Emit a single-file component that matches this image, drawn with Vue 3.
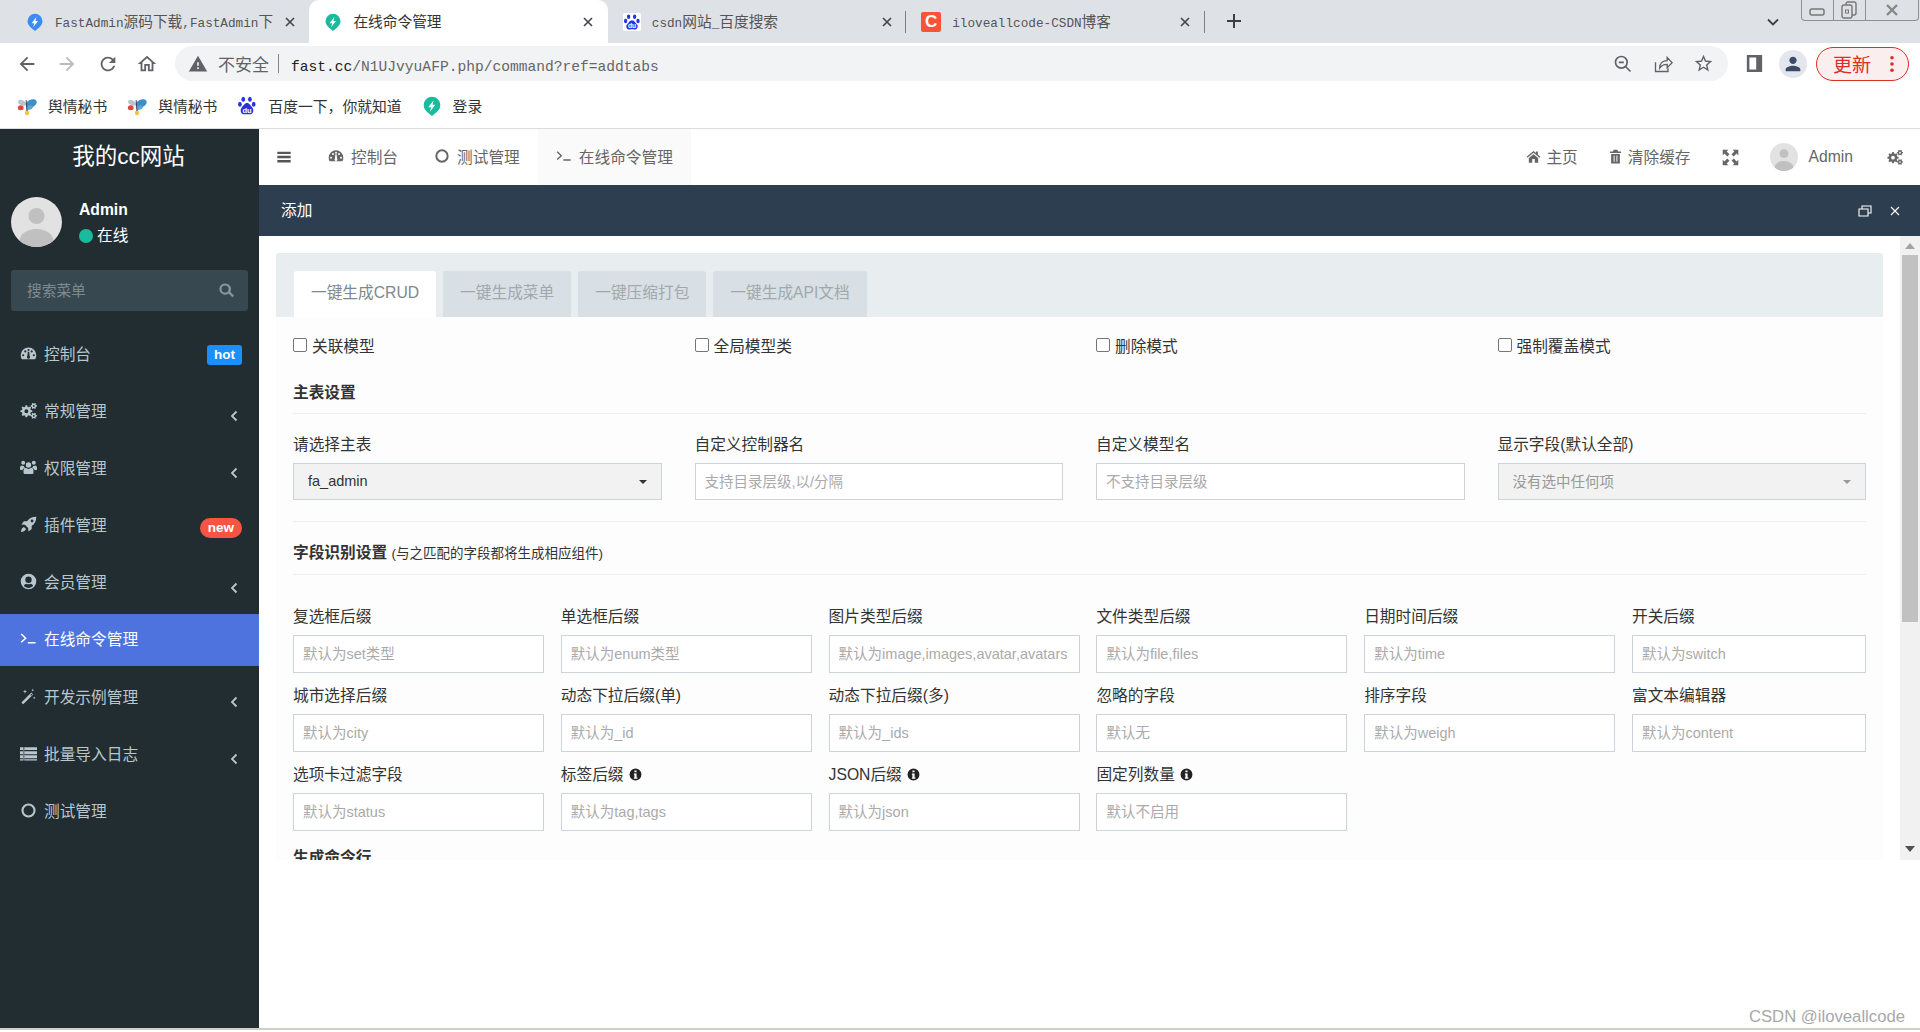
<template>
  <div class="page">
    <!-- browser chrome -->
    <div class="tabstrip">
      <div v-for="tab in browserTabs" :key="tab.id" class="btab" :class="{ active: tab.active }">
        <svg v-if="tab.icon === 'drop'" class="fav" viewBox="0 0 24 24">
          <path :fill="tab.color" :d="icons.drop" />
          <path fill="#fff" :d="icons.bolt" />
        </svg>
        <svg v-else-if="tab.icon === 'baidu'" class="fav" viewBox="0 0 24 24">
          <rect width="24" height="24" rx="2" fill="#fff" />
          <g fill="#2932e1">
            <ellipse cx="7.5" cy="5" rx="2.2" ry="3" />
            <ellipse cx="15.5" cy="5" rx="2.2" ry="3" />
            <ellipse cx="3.5" cy="10.5" rx="2.2" ry="3" />
            <ellipse cx="20" cy="10.5" rx="2.2" ry="3" />
            <path d="M12 9.5c-3 0-4 3-6.500 5.500C3 18 5 22.500 9 22c2-.3 4-.3 6 0 4 .5 6-4 3.500-7-2.500-2.500-3.500-5.500-6.500-5.500z" />
          </g>
          <text x="12" y="20" text-anchor="middle" class="du">du</text>
        </svg>
        <div v-else class="fav csdn">C</div>
        <div class="btab-title" :class="{ plain: tab.active }">
          <span v-for="(part, i) in tab.title" :key="i" :class="{ han: i % 2 === 1 }">{{ part }}</span>
        </div>
        <svg class="btab-close" viewBox="0 0 12 12">
          <path d="M2 2l8 8M10 2l-8 8" fill="none" stroke="#45494e" stroke-width="1.700" />
        </svg>
        <i v-if="!tab.active && tab.sep" class="btab-sep"></i>
      </div>
      <svg class="newtab" viewBox="0 0 16 16"><path d="M8 1v14M1 8h14" fill="none" stroke="#3c4043" stroke-width="2" /></svg>
      <svg class="tablist" viewBox="0 0 12 8"><path d="M1 1.500l5 5 5-5" fill="none" stroke="#3c4043" stroke-width="1.800" /></svg>
      <div class="winctl">
        <span class="wc wc-min"><svg viewBox="0 0 16 10"><rect x="1" y="2" width="14" height="6" rx="2" fill="none" stroke="#777" stroke-width="1.500" /></svg></span>
        <span class="wc wc-max"><svg viewBox="0 0 16 18"><rect x="5" y="1" width="10" height="13" rx="2" fill="#dee1e6" stroke="#777" stroke-width="1.400" /><rect x="1" y="4" width="10" height="13" rx="2" fill="#dee1e6" stroke="#777" stroke-width="1.400" /><rect x="4.500" y="9" width="3" height="3" fill="none" stroke="#777" /></svg></span>
        <span class="wc wc-close"><svg viewBox="0 0 14 14"><path d="M2 2l10 10M12 2L2 12" fill="none" stroke="#888" stroke-width="2.400" /></svg></span>
      </div>
    </div>

    <div class="toolbar">
      <svg class="tool back" viewBox="0 0 24 24"><path fill="#5f6368" :d="icons.back" /></svg>
      <svg class="tool fwd" viewBox="0 0 24 24"><path fill="#b8bbc0" :d="icons.forward" /></svg>
      <svg class="tool reload" viewBox="0 0 24 24"><path fill="#5f6368" :d="icons.reload" /></svg>
      <svg class="tool homebtn" viewBox="0 0 24 24"><path fill="#5f6368" :d="icons.homeOutline" /></svg>
      <div class="omnibox">
        <svg class="warn" viewBox="0 0 24 24">
          <path fill="#5f6368" d="M1 21h22L12 2 1 21z" />
          <path fill="#f1f3f4" d="M13 18h-2v-2h2v2zm0-4h-2v-4h2v4z" />
        </svg>
        <span class="insecure">不安全</span>
        <i class="omni-sep"></i>
        <span class="url"><b>fast.cc</b>/N1UJvyuAFP.php/command?ref=addtabs</span>
        <svg class="omni-ico zoomout" viewBox="0 0 24 24">
          <circle cx="10" cy="10" r="7" fill="none" stroke="#5f6368" stroke-width="2" />
          <path d="M15 15l6 6M7 10h6" fill="none" stroke="#5f6368" stroke-width="2" />
        </svg>
        <svg class="omni-ico share" viewBox="0 0 24 24">
          <path d="M3 10v11h15v-4M8 17c0-6 4-9 9-9V4l6 6.500-6 6V12.500c-4 0-7 1.500-9 4.500z" fill="none" stroke="#5f6368" stroke-width="1.600" />
        </svg>
        <svg class="omni-ico star" viewBox="0 0 24 24"><path fill="#5f6368" :d="icons.star" /></svg>
      </div>
      <svg class="panel" viewBox="0 0 18 20"><path fill-rule="evenodd" fill="#5f6368" d="M0 0h18v20H0zM3 3v14h8V3z" /></svg>
      <div class="profile"><svg viewBox="0 0 24 24"><path fill="#3c4c66" :d="icons.person" /></svg></div>
      <div class="update">
        <span>更新</span>
        <svg viewBox="0 0 4 20"><circle cx="2" cy="3" r="2" /><circle cx="2" cy="10" r="2" /><circle cx="2" cy="17" r="2" /></svg>
      </div>
    </div>

    <div class="bookmarks">
      <div v-for="mark in bookmarks" :key="mark.id" class="mark">
        <svg v-if="mark.icon === 'fly'" viewBox="0 0 24 24">
          <ellipse cx="6" cy="8" rx="5" ry="3" fill="#b9c4cc" transform="rotate(25 6 8)" />
          <ellipse cx="17" cy="9" rx="7" ry="4.500" fill="#3d8fc4" transform="rotate(-25 17 9)" />
          <ellipse cx="15" cy="14" rx="4" ry="2.500" fill="#5aa6d0" transform="rotate(-20 15 14)" />
          <ellipse cx="4.500" cy="14" rx="3.500" ry="3" fill="#e2453a" />
          <ellipse cx="12" cy="20" rx="2.500" ry="3.200" fill="#f2c437" />
          <path d="M11 5l1 13" stroke="#446" stroke-width="1.200" />
        </svg>
        <svg v-else-if="mark.icon === 'baidu'" viewBox="0 0 24 24">
          <g fill="#2932e1">
            <ellipse cx="7.500" cy="4" rx="2.200" ry="3" />
            <ellipse cx="15.500" cy="4" rx="2.200" ry="3" />
            <ellipse cx="3.500" cy="10" rx="2.200" ry="3" />
            <ellipse cx="20" cy="10" rx="2.200" ry="3" />
            <path d="M12 8.500c-3 0-4 3-6.500 5.500C3 17 5 22.500 9 22c2-.3 4-.3 6 0 4 .5 6-5 3.500-8-2.500-2.500-3.500-5.500-6.500-5.500z" />
          </g>
          <text x="12" y="20" text-anchor="middle" class="du">du</text>
        </svg>
        <svg v-else viewBox="0 0 24 24">
          <path fill="#18bc9c" :d="icons.drop" />
          <path fill="#fff" :d="icons.bolt" />
        </svg>
        <span>{{ mark.text }}</span>
      </div>
    </div>

    <!-- admin page -->
    <div class="admin">
      <aside class="sidebar">
        <div class="logo">我的cc网站</div>
        <div class="user">
          <svg class="avatar" viewBox="0 0 50 50">
            <circle cx="25" cy="19" r="8" fill="#c0c0c0" />
            <ellipse cx="25" cy="44" rx="17" ry="12" fill="#c0c0c0" />
          </svg>
          <div class="user-info">
            <div class="user-name">Admin</div>
            <div class="user-state"><i></i>在线</div>
          </div>
        </div>
        <div class="menu-search">
          <span>搜索菜单</span>
          <svg viewBox="0 0 24 24"><path fill="#8a9499" :d="icons.search" /></svg>
        </div>
        <nav class="menu">
          <a v-for="item in menu" :key="item.text" class="menu-item" :class="{ active: item.active }">
            <svg viewBox="0 0 24 24"><path fill-rule="evenodd" fill="currentColor" :d="icons[item.icon]" /></svg>
            <span>{{ item.text }}</span>
            <em v-if="item.badge" class="badge" :class="item.badge">{{ item.badge }}</em>
            <svg v-if="item.sub" class="caret" viewBox="0 0 8 12"><path d="M6.500 1.500L2 6l4.500 4.500" fill="none" stroke="currentColor" stroke-width="1.800" /></svg>
          </a>
        </nav>
      </aside>

      <div class="main">
        <header class="topbar">
          <svg class="bars" viewBox="0 0 24 24"><path fill="#555" :d="icons.bars" /></svg>
          <a v-for="nav in navTabs" :key="nav.text" class="nav" :class="{ current: nav.current }">
            <svg viewBox="0 0 24 24"><path fill-rule="evenodd" fill="#666" :d="icons[nav.icon]" /></svg>
            {{ nav.text }}
          </a>
          <div class="top-right">
            <a class="top-link home-link"><svg viewBox="0 0 24 24"><path fill="#666" :d="icons.home" /></svg>主页</a>
            <a class="top-link cache-link"><svg viewBox="0 0 24 24"><path fill="#666" :d="icons.trash" /></svg>清除缓存</a>
            <svg class="expand" viewBox="0 0 24 24"><path fill="#666" :d="icons.expand" /></svg>
            <svg class="top-avatar" viewBox="0 0 50 50">
              <circle cx="25" cy="19" r="8" fill="#c0c0c0" />
              <ellipse cx="25" cy="44" rx="17" ry="12" fill="#c0c0c0" />
            </svg>
            <span class="top-name">Admin</span>
            <svg class="top-cogs" viewBox="0 0 24 24"><path fill-rule="evenodd" fill="#666" :d="icons.cogs" /></svg>
          </div>
        </header>

        <div class="dialog-title">
          <span>添加</span>
          <svg class="restore" viewBox="0 0 14 12"><path d="M1 4h9v7H1zM4 4V1h9v7h-3" fill="none" stroke="#fff" stroke-width="1.100" /></svg>
          <svg class="closer" viewBox="0 0 10 10"><path d="M1 1l8 8M9 1L1 9" fill="none" stroke="#fff" stroke-width="1.100" /></svg>
        </div>

        <div class="dialog-body">
          <div class="scroller">
            <div class="pane-head">
              <a v-for="(tab, i) in formTabs" :key="tab" class="pane-tab" :class="{ on: i === 0 }">{{ tab }}</a>
            </div>
            <div class="pane-body">
              <div class="grid-4 checks">
                <label v-for="opt in checks" :key="opt" class="check"><i></i>{{ opt }}</label>
              </div>
              <h4 class="section first">主表设置</h4>
              <div class="grid-4 main-fields">
                <div v-for="field in mainFields" :key="field.label">
                  <div class="label">{{ field.label }}</div>
                  <div v-if="field.select" class="select" :class="{ muted: field.muted }">
                    <span>{{ field.value }}</span><b></b>
                  </div>
                  <input v-else class="input short" :placeholder="field.placeholder" />
                </div>
              </div>
              <div class="divider"></div>
              <h4 class="section">字段识别设置 <small>(与之匹配的字段都将生成相应组件)</small></h4>
              <div class="grid-6">
                <div v-for="field in suffixFields" :key="field.label" class="cell">
                  <div class="label">
                    {{ field.label }}
                    <svg v-if="field.info" class="info" viewBox="0 0 24 24"><path fill-rule="evenodd" fill="#222" :d="icons.info" /></svg>
                  </div>
                  <input class="input" :placeholder="field.placeholder" />
                </div>
              </div>
              <h4 class="section last">生成命令行</h4>
            </div>
          </div>
          <div class="scrollbar">
            <i class="arrow up"></i>
            <div class="thumb"></div>
            <i class="arrow down"></i>
          </div>
        </div>
      </div>
    </div>
    <div class="page-end"></div>
    <div class="watermark">CSDN @iloveallcode</div>
  </div>
</template>

<script setup>
// gear outline, used for the cogs icon
const gear = (cx, cy, ro, ri, hole, n) => {
  const pts = []
  for (let i = 0; i < n; i++) {
    const a = (i / n) * Math.PI * 2
    const w = Math.PI / n / 2
    const list = [[ri, a - w * 1.3], [ro, a - w * 0.7], [ro, a + w * 0.7], [ri, a + w * 1.3]]
    for (const [r, t] of list) {
      pts.push(`${(cx + r * Math.cos(t)).toFixed(2)} ${(cy + r * Math.sin(t)).toFixed(2)}`)
    }
  }
  const circle = `M${cx - hole} ${cy}a${hole} ${hole} 0 1 0 ${hole * 2} 0a${hole} ${hole} 0 1 0 ${-hole * 2} 0z`
  return `M${pts.join('L')}z${circle}`
}

const icons = {
  drop: 'M12 1a10 10 0 0 0-10 10c0 6 6 9.500 10 13 4-3.500 10-7 10-13A10 10 0 0 0 12 1z',
  bolt: 'M14 5l-6.500 8.500H11L9.500 19l6.500-8.500h-3.500z',
  back: 'M20 11H7.830l5.590-5.590L12 4l-8 8 8 8 1.410-1.410L7.830 13H20v-2z',
  forward: 'M12 4l-1.410 1.410L16.170 11H4v2h12.170l-5.580 5.590L12 20l8-8z',
  reload: 'M17.650 6.350C16.200 4.900 14.210 4 12 4c-4.420 0-7.990 3.580-7.990 8s3.570 8 7.990 8c3.730 0 6.840-2.550 7.730-6h-2.080c-.82 2.330-3.040 4-5.650 4-3.310 0-6-2.690-6-6s2.690-6 6-6c1.660 0 3.140.69 4.220 1.780L13 11h7V4l-2.350 2.350z',
  homeOutline: 'M12 5.690l5 4.500V18h-2v-6H9v6H7v-7.810l5-4.500M12 3L2 12h3v8h6v-6h2v6h6v-8h3L12 3z',
  star: 'M22 9.240l-7.190-.62L12 2 9.190 8.630 2 9.240l5.460 4.730L5.820 21 12 17.270 18.180 21l-1.630-7.030L22 9.240zM12 15.400l-3.760 2.270 1-4.280-3.320-2.880 4.380-.38L12 6.100l1.710 4.040 4.380.38-3.320 2.880 1 4.280L12 15.400z',
  person: 'M12 12c2.210 0 4-1.790 4-4s-1.790-4-4-4-4 1.790-4 4 1.790 4 4 4zm0 2c-2.670 0-8 1.340-8 4v2h16v-2c0-2.660-5.330-4-8-4z',
  search: 'M10 2a8 8 0 1 0 4.900 14.300l5.400 5.400 2.400-2.400-5.400-5.400A8 8 0 0 0 10 2zm0 3a5 5 0 1 1 0 10 5 5 0 0 1 0-10z',
  dashboard: 'M12 3.500A11 11 0 0 0 1 14.500c0 2 .5 3.800 1.500 5.500h19c1-1.700 1.500-3.500 1.500-5.500a11 11 0 0 0-11-11zM4.500 13a1.500 1.500 0 1 1 0 3 1.500 1.500 0 0 1 0-3zM7.500 7.500a1.500 1.500 0 1 1 0 3 1.500 1.500 0 0 1 0-3zM12 5.500a1.500 1.500 0 1 1 0 3 1.500 1.500 0 0 1 0-3zM16.500 7.500a1.500 1.500 0 1 1 0 3 1.500 1.500 0 0 1 0-3zM19.500 13a1.500 1.500 0 1 1 0 3 1.500 1.500 0 0 1 0-3zM11 9.500l2 0 .6 6.200a2.200 2.200 0 1 1-3.200 0z',
  cogs: gear(9, 13, 8.5, 6.5, 2.8, 8) + gear(19.5, 5.5, 4.5, 3.3, 1.3, 6) + gear(19.5, 19.5, 4.5, 3.3, 1.3, 6),
  users: 'M12 4.500a3.800 3.800 0 1 1 0 7.600 3.800 3.800 0 0 1 0-7.600zM4.500 2.500a2.800 2.800 0 1 1 0 5.600 2.800 2.800 0 0 1 0-5.600zM19.500 2.500a2.800 2.800 0 1 1 0 5.600 2.800 2.800 0 0 1 0-5.600zM6.500 21c-1 0-1.500-.6-1.500-1.500V16c0-2.500 2-3.500 3.500-3.500 1 1 2.200 1.500 3.500 1.500s2.500-.5 3.500-1.500c1.500 0 3.500 1 3.500 3.500v3.500c0 .9-.5 1.500-1.500 1.500zM0 15v-3c0-2 1.500-3 3-3 .6.600 1.500.900 2.500.800.200 1 .700 1.800 1.500 2.400-2 .5-3.500 2-3.500 3.800zM24 15v-3c0-2-1.500-3-3-3-.6.600-1.500.900-2.500.800-.200 1-.700 1.800-1.500 2.400 2 .5 3.500 2 3.500 3.800z',
  rocket: 'M23 1c-5.500 0-10 2-13 6.500H5.500l-3.500 4.500 5 .5 4.500 4.500.5 5 4.500-3.500V14C21 11 23 6.500 23 1zM17 5a2 2 0 1 1 0 4 2 2 0 0 1 0-4zM5.500 15.500C3 16.500 1.500 19 1.500 22.500c3.500 0 6-1.500 7-4z',
  user: 'M12 1a11 11 0 1 0 0 22 11 11 0 0 0 0-22zM12 5a4.500 4.500 0 1 1 0 9 4.500 4.500 0 0 1 0-9zM5.500 18.500c.5-2.500 2.500-3.500 4-3.500.7.500 1.500.8 2.500.8s1.800-.3 2.500-.8c1.500 0 3.500 1 4 3.500-1.800 1.700-4 2.500-6.500 2.500s-4.700-.8-6.500-2.500z',
  terminal: 'M1 6.500l1.500-1.500 7 6.500-7 6.500L1 16.500l5.500-5zM11 17h11v2H11z',
  magic: 'M2 20.500L16 6.500l2.500 2.500L4.500 23zM14.500 10l2-2 1 1-2 2zM7 2l.8 2.200L10 5l-2.200.8L7 8l-.8-2.200L4 5l2.200-.8zM20 12l.6 1.400 1.400.6-1.400.6L20 16l-.6-1.400-1.400-.6 1.400-.6zM18 1l.6 1.400L20 3l-1.400.6L18 5l-.6-1.400L16 3l1.400-.6z',
  list: 'M0 3h24v4.200H0zM0 8.700h24v4.200H0zM0 14.400h24v4.200H0zM0 20h24v2H0zM5 3h1v19H5z',
  circle: 'M12 2a10 10 0 1 0 0 20 10 10 0 0 0 0-20zM12 5a7 7 0 1 1 0 14 7 7 0 0 1 0-14z',
  bars: 'M2 4h20v3.500H2zM2 10.300h20v3.500H2zM2 16.600h20v3.500H2z',
  home: 'M12 3L1 12.500l1.300 1.500L12 6l9.700 8 1.300-1.500-4-3.400V4h-3v2.500zM4.500 14.500V22h5.500v-6h4v6h5.500v-7.500L12 8.300z',
  trash: 'M9 1h6l1 3h5v2.500H3V4h5zM5 8h14v15H5zM9 10.500v10h1.500v-10zM13.500 10.500v10H15v-10z',
  expand: 'M1 1h8L6.500 3.500 10.500 7.500 7.500 10.500 3.500 6.500 1 9zM23 1v8l-2.500-2.500-4 4-3-3 4-4L15 1zM1 23v-8l2.500 2.500 4-4 3 3-4 4L9 23zM23 23h-8l2.500-2.500-4-4 3-3 4 4L23 15z',
  info: 'M12 1a11 11 0 1 0 0 22 11 11 0 0 0 0-22zM10 4.500h4v3.500h-4zM9 10h5v7.500h1.500V20h-6.500v-2.500H10v-5H9z',
}

const browserTabs = [
  { id: 1, icon: 'drop', color: '#3d8af7', title: ['FastAdmin', '源码下载', ',FastAdmin', '下载'], sep: false },
  { id: 2, icon: 'drop', color: '#18bc9c', title: ['', '在线命令管理'], active: true },
  { id: 3, icon: 'baidu', title: ['csdn', '网站', '_', '百度搜索'], sep: true },
  { id: 4, icon: 'csdn', title: ['iloveallcode-CSDN', '博客'], sep: true },
]

const bookmarks = [
  { id: 1, icon: 'fly', text: '舆情秘书' },
  { id: 2, icon: 'fly', text: '舆情秘书' },
  { id: 3, icon: 'baidu', text: '百度一下，你就知道' },
  { id: 4, icon: 'drop', text: '登录' },
]

const menu = [
  { text: '控制台', icon: 'dashboard', badge: 'hot' },
  { text: '常规管理', icon: 'cogs', sub: true },
  { text: '权限管理', icon: 'users', sub: true },
  { text: '插件管理', icon: 'rocket', badge: 'new' },
  { text: '会员管理', icon: 'user', sub: true },
  { text: '在线命令管理', icon: 'terminal', active: true },
  { text: '开发示例管理', icon: 'magic', sub: true },
  { text: '批量导入日志', icon: 'list', sub: true },
  { text: '测试管理', icon: 'circle' },
]

const navTabs = [
  { text: '控制台', icon: 'dashboard' },
  { text: '测试管理', icon: 'circle' },
  { text: '在线命令管理', icon: 'terminal', current: true },
]

const formTabs = ['一键生成CRUD', '一键生成菜单', '一键压缩打包', '一键生成API文档']
const checks = ['关联模型', '全局模型类', '删除模式', '强制覆盖模式']

const mainFields = [
  { label: '请选择主表', select: true, value: 'fa_admin' },
  { label: '自定义控制器名', placeholder: '支持目录层级,以/分隔' },
  { label: '自定义模型名', placeholder: '不支持目录层级' },
  { label: '显示字段(默认全部)', select: true, muted: true, value: '没有选中任何项' },
]

const suffixFields = [
  { label: '复选框后缀', placeholder: '默认为set类型' },
  { label: '单选框后缀', placeholder: '默认为enum类型' },
  { label: '图片类型后缀', placeholder: '默认为image,images,avatar,avatars' },
  { label: '文件类型后缀', placeholder: '默认为file,files' },
  { label: '日期时间后缀', placeholder: '默认为time' },
  { label: '开关后缀', placeholder: '默认为switch' },
  { label: '城市选择后缀', placeholder: '默认为city' },
  { label: '动态下拉后缀(单)', placeholder: '默认为_id' },
  { label: '动态下拉后缀(多)', placeholder: '默认为_ids' },
  { label: '忽略的字段', placeholder: '默认无' },
  { label: '排序字段', placeholder: '默认为weigh' },
  { label: '富文本编辑器', placeholder: '默认为content' },
  { label: '选项卡过滤字段', placeholder: '默认为status' },
  { label: '标签后缀', placeholder: '默认为tag,tags', info: true },
  { label: 'JSON后缀', placeholder: '默认为json', info: true },
  { label: '固定列数量', placeholder: '默认不启用', info: true },
]
</script>

<style scoped>
.page {
  position: relative;
  height: 1032px;
  overflow: hidden;
  background: #fff;
  font-family: "Liberation Sans", "Noto Sans CJK SC", sans-serif;
  font-size: 15.7px;
  color: #333;
}

/* tab strip */
.tabstrip {
  display: flex;
  align-items: stretch;
  height: 43px;
  padding-left: 11px;
  background: #dee1e6;
}
.btab {
  position: relative;
  display: flex;
  align-items: center;
  width: 298.400px;
  flex: none;
  padding-left: 15px;
  box-sizing: border-box;
}
.btab.active {
  background: #fff;
  border-radius: 10px 10px 0 0;
}
.fav {
  flex: none;
  width: 18px;
  height: 20px;
}
.fav.csdn {
  width: 20px;
  height: 20px;
  background: #f8533a;
  color: #fff;
  border-radius: 2px;
  font: bold 17px/20px "Liberation Sans", sans-serif;
  text-align: center;
}
.du {
  font: bold 9px "Liberation Sans", sans-serif;
  fill: #fff;
}
.btab-title {
  flex: none;
  width: 218px;
  margin-left: 11px;
  padding-bottom: 3px;
  overflow: hidden;
  white-space: nowrap;
  font-family: "Liberation Mono", "Noto Sans CJK SC", monospace;
  font-size: 12.700px;
  color: #555;
}
.btab-title .han {
  font-size: 14.700px;
  font-family: "Noto Sans CJK SC", sans-serif;
}
.btab-title.plain {
  color: #333;
}
.btab-close {
  position: absolute;
  left: 273px;
  top: 16px;
  width: 12px;
  height: 12px;
}
.btab-sep {
  position: absolute;
  right: 0;
  top: 11px;
  width: 1px;
  height: 22px;
  background: #7d8187;
}
.newtab {
  width: 16px;
  height: 16px;
  margin: 13px 0 0 21px;
}
.tablist {
  width: 12px;
  height: 8px;
  margin: 18px 0 0 525px;
}
.winctl {
  display: flex;
  height: 21px;
  margin-left: 22px;
  border: 1px solid #8d9195;
  border-top: 0;
  border-radius: 0 0 4px 4px;
  box-sizing: border-box;
}
.wc {
  display: flex;
  align-items: center;
  justify-content: center;
  height: 20px;
}
.wc-min { width: 31px; }
.wc-max { width: 31px; border-left: 1px solid #8d9195; }
.wc-close { width: 52px; border-left: 1px solid #8d9195; }
.wc-min svg { width: 16px; height: 10px; margin-top: 3px; }
.wc-max svg { width: 16px; height: 18px; }
.wc-close svg { width: 14px; height: 14px; }

/* toolbar */
.toolbar {
  display: flex;
  align-items: center;
  height: 41px;
  background: #fff;
}
.tool {
  flex: none;
  width: 22px;
  height: 22px;
}
.back { margin-left: 16px; }
.fwd { margin-left: 18px; }
.reload { margin-left: 19px; }
.homebtn { margin-left: 17px; }
.omnibox {
  display: flex;
  align-items: center;
  flex: none;
  width: 1553px;
  height: 35px;
  margin: 0 0 0 17px;
  padding-left: 13px;
  box-sizing: border-box;
  border-radius: 18px;
  background: #f1f3f4;
}
.warn {
  width: 20px;
  height: 20px;
  flex: none;
}
.insecure {
  margin-left: 10px;
  font-size: 17px;
  color: #5f6368;
}
.omni-sep {
  width: 1px;
  height: 19px;
  margin: 0 12px 0 9px;
  background: #80868b;
}
.url {
  flex: 1;
  padding-top: 6px;
  font-family: "Liberation Mono", monospace;
  font-size: 14.600px;
  color: #666;
}
.url b {
  font-weight: normal;
  color: #222;
}
.omni-ico {
  flex: none;
  width: 20px;
  height: 20px;
}
.share { margin-left: 20px; }
.star { margin: 0 14px 0 20px; width: 21px; height: 21px; }
.panel {
  flex: none;
  width: 17px;
  height: 17px;
  margin-left: 18px;
}
.profile {
  display: flex;
  align-items: center;
  justify-content: center;
  flex: none;
  width: 28px;
  height: 28px;
  margin-left: 16px;
  border-radius: 50%;
  background: #e3e6ec;
}
.profile svg {
  width: 22px;
  height: 22px;
}
.update {
  display: flex;
  align-items: center;
  flex: none;
  width: 93px;
  height: 34px;
  margin-left: 9px;
  padding-left: 16px;
  box-sizing: border-box;
  border: 1px solid #d93025;
  border-radius: 17px;
  background: #fbeeee;
  color: #d93025;
  font-size: 19px;
}
.update svg {
  width: 4px;
  height: 18px;
  margin-left: 19px;
  fill: #d93025;
}

/* bookmarks */
.bookmarks {
  display: flex;
  align-items: center;
  height: 44px;
  padding-left: 17px;
  border-bottom: 1px solid #dcdcdc;
  box-sizing: content-box;
  background: #fff;
}
.mark {
  display: flex;
  align-items: center;
  margin-right: 20px;
  font-size: 14.800px;
  color: #333;
}
.mark span {
  padding-bottom: 2px;
}
.mark svg {
  width: 20px;
  height: 20px;
  margin-right: 11px;
}

/* admin layout */
.admin {
  display: flex;
  height: 899px;
}
.sidebar {
  flex: none;
  width: 259px;
  background: #222d32;
  color: #b8c7ce;
}
.logo {
  height: 56px;
  padding-right: 2px;
  line-height: 56px;
  text-align: center;
  font-size: 22.500px;
  color: #fff;
}
.user {
  display: flex;
  align-items: center;
  height: 50px;
  margin-top: 12px;
  padding-left: 11px;
}
.avatar {
  flex: none;
  width: 51px;
  height: 50px;
  border-radius: 50%;
  background: #e2e2e2;
}
.user-info {
  margin-left: 17px;
  padding-top: 3px;
  color: #fff;
}
.user-name {
  font-weight: bold;
  line-height: 24px;
}
.user-state {
  display: flex;
  align-items: center;
  line-height: 27px;
}
.user-state i {
  width: 14px;
  height: 14px;
  margin-right: 4px;
  border-radius: 50%;
  background: #18bc9c;
}
.menu-search {
  display: flex;
  align-items: center;
  justify-content: space-between;
  height: 41px;
  margin: 23px 11px 0;
  padding: 0 13px 0 16px;
  border-radius: 3px;
  background: #374850;
  color: #7f8a90;
  font-size: 14.700px;
}
.menu-search span {
  padding-bottom: 2px;
}
.menu-search svg {
  width: 17px;
  height: 17px;
}
.menu {
  display: flex;
  flex-direction: column;
  gap: 5.200px;
  margin-top: 17px;
}
.menu-item {
  display: flex;
  align-items: center;
  height: 52px;
  padding-left: 20px;
}
.menu-item > span {
  padding-bottom: 2px;
}
.menu-item > svg:first-child {
  flex: none;
  width: 17px;
  height: 17px;
  margin-right: 7px;
  margin-bottom: 2px;
}
.menu-item.active {
  background: #4e73df;
  color: #fff;
}
.badge {
  margin-left: auto;
  margin-right: 17px;
  font: bold 13.500px/20px "Liberation Sans", sans-serif;
  color: #fff;
  text-align: center;
}
.badge.hot {
  width: 35px;
  border-radius: 3px;
  background: #1890ff;
  transform: translateY(1px);
}
.badge.new {
  width: 42px;
  border-radius: 11px;
  background: #f75444;
  transform: translateY(2px);
}
.caret {
  width: 8px;
  height: 12px;
  margin-left: auto;
  margin-right: 21px;
  transform: translateY(5px);
}

/* top bar */
.main {
  flex: 1;
  min-width: 0;
  display: flex;
  flex-direction: column;
}
.topbar {
  display: flex;
  align-items: stretch;
  height: 56px;
  background: #fff;
  color: #666;
}
.bars {
  flex: none;
  width: 16px;
  height: 16px;
  margin: 20px 18px 0 17px;
}
.nav {
  display: flex;
  align-items: center;
  gap: 7px;
  padding: 0 18px 2px;
}
.nav svg {
  flex: none;
  width: 16px;
  height: 16px;
}
.nav.current {
  background: #fafafa;
}
.top-right {
  display: flex;
  align-items: center;
  margin-left: auto;
  padding-right: 17px;
}
.top-link {
  display: flex;
  align-items: center;
  gap: 5px;
  padding-bottom: 2px;
}
.top-link svg {
  width: 15px;
  height: 15px;
}
.cache-link { margin-left: 30px; }
.expand {
  width: 17px;
  height: 17px;
  margin-left: 31px;
}
.top-avatar {
  width: 28px;
  height: 28px;
  margin-left: 31px;
  border-radius: 50%;
  background: #e2e2e2;
}
.top-name { margin-left: 11px; }
.top-cogs {
  width: 16px;
  height: 16px;
  margin-left: 34px;
}

/* dialog */
.dialog-title {
  display: flex;
  align-items: center;
  height: 51px;
  padding: 0 20px 0 22px;
  background: #2c3e50;
  color: #fff;
}
.dialog-title span {
  flex: 1;
  padding-bottom: 2px;
}
.restore {
  width: 14px;
  height: 12px;
}
.closer {
  width: 10px;
  height: 10px;
  margin-left: 18px;
}
.dialog-body {
  display: flex;
  height: 624px;
}
.scroller {
  flex: 1;
  min-width: 0;
  padding: 17px 17px 0;
  overflow: hidden;
}
.pane-head {
  display: flex;
  gap: 7px;
  height: 64px;
  padding: 18px 0 0 18px;
  box-sizing: border-box;
  background: #e8edf0;
  border-radius: 3px 3px 0 0;
}
.pane-tab {
  height: 44px;
  line-height: 44px;
  padding: 0 17px 2px;
  border-radius: 3px 3px 0 0;
  background: #d8dfe5;
  color: #a0aaab;
}
.pane-tab.on {
  background: #fff;
  color: #7b8a8b;
}
.pane-body {
  padding: 18px 17px 0;
  background: #fdfdfd;
}
.grid-4 {
  display: grid;
  grid-template-columns: repeat(4, 1fr);
  column-gap: 33px;
}
.check {
  display: flex;
  align-items: center;
  height: 20px;
  color: #333;
}
.check i {
  width: 12px;
  height: 12px;
  margin-right: 5px;
  border: 1px solid #767676;
  border-radius: 2px;
  background: #fff;
}
.section {
  margin: 27px 0 0;
  padding-bottom: 10px;
  font-size: 15.700px;
  line-height: 20px;
  font-weight: bold;
  color: #333;
  border-bottom: 1px solid #eee;
}
.section small {
  font-size: 13.500px;
  font-weight: normal;
}
.section.first { margin-top: 28px; }
.section.last {
  margin-top: 17px;
  border: 0;
}
.main-fields { margin-top: 21px; }
.label {
  height: 20px;
  line-height: 20px;
  margin-bottom: 8px;
  color: #333;
  white-space: nowrap;
}
.input,
.select {
  display: block;
  width: 100%;
  height: 38px;
  box-sizing: border-box;
  padding: 0 9px;
  border: 1px solid #cdd2dc;
  border-radius: 0;
  background: #fff;
  font: 14.500px "Liberation Sans", "Noto Sans CJK SC", sans-serif;
  color: #333;
  outline: none;
}
.input.short {
  height: 37px;
}
.input::placeholder {
  color: #aaa;
  opacity: 1;
}
.select {
  display: flex;
  align-items: center;
  justify-content: space-between;
  height: 37px;
  padding: 0 14px;
  background: #f2f2f2;
}
.select span {
  padding-bottom: 2px;
}
.select b {
  width: 0;
  height: 0;
  border-left: 4px solid transparent;
  border-right: 4px solid transparent;
  border-top: 4px solid #333;
}
.select.muted {
  color: #999;
}
.select.muted b {
  border-top-color: #999;
}
.divider {
  height: 1px;
  margin-top: 21px;
  background: #eee;
}
.divider + .section { margin-top: 21px; }
.grid-6 {
  display: grid;
  grid-template-columns: repeat(5, 251px) 1fr;
  column-gap: 16.800px;
  row-gap: 13px;
  margin-top: 32px;
}
.info {
  width: 13px;
  height: 13px;
  margin-left: 1px;
  vertical-align: -1px;
}

/* scrollbar */
.scrollbar {
  display: flex;
  flex-direction: column;
  align-items: center;
  flex: none;
  width: 20px;
  background: #f1f1f1;
}
.thumb {
  width: 16px;
  height: 367px;
  margin-top: 6px;
  background: #c1c1c1;
}
.arrow {
  width: 0;
  height: 0;
  border-left: 5px solid transparent;
  border-right: 5px solid transparent;
}
.arrow.up {
  margin-top: 7px;
  border-bottom: 6px solid #a3a3a3;
}
.arrow.down {
  margin-top: auto;
  margin-bottom: 8px;
  border-top: 6px solid #505050;
}

.page-end {
  height: 2px;
  background: #d2d0c4;
}
.watermark {
  position: absolute;
  right: 15px;
  bottom: 5px;
  font-size: 16.700px;
  line-height: 20px;
  color: #a8a8a8;
}
</style>
